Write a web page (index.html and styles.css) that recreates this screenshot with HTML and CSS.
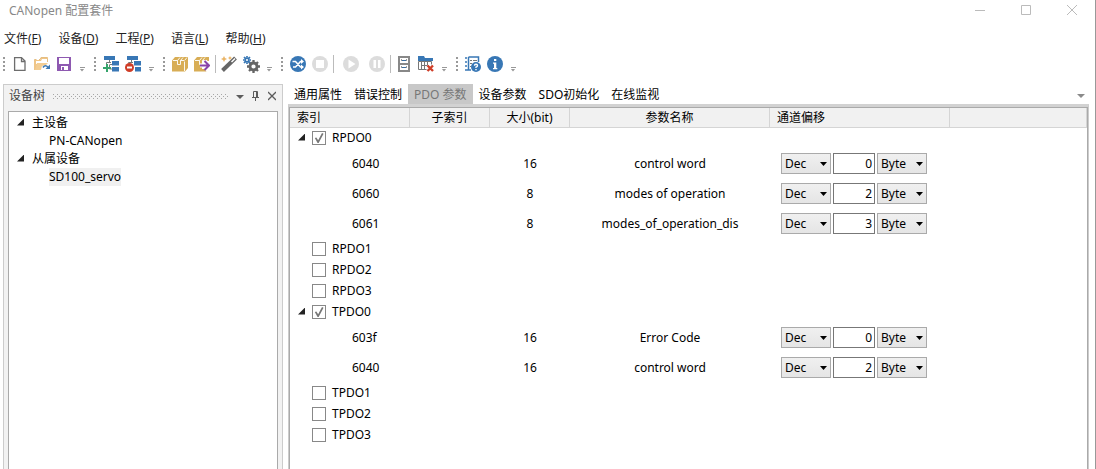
FILE: index.html
```html
<!DOCTYPE html>
<html lang="zh-CN">
<head>
<meta charset="utf-8">
<title>CANopen 配置套件</title>
<link rel="stylesheet" href="styles.css">
</head>
<body>
<div class="window">
  <header class="titlebar">
    <h1 class="title">CANopen 配置套件</h1>
    <div class="window-buttons">
      <button class="window-button" aria-label="最小化"><svg width="12" height="12"><path d="M1 6.500h10"/></svg></button>
      <button class="window-button" aria-label="最大化"><svg width="12" height="12"><path d="M1.500 1.500h9v9h-9z"/></svg></button>
      <button class="window-button" aria-label="关闭"><svg width="12" height="12"><path d="M1 1l10 10M11 1L1 11"/></svg></button>
    </div>
  </header>

  <nav class="menubar">
    <button class="menu-item">文件(<u>F</u>)</button>
    <button class="menu-item">设备(<u>D</u>)</button>
    <button class="menu-item">工程(<u>P</u>)</button>
    <button class="menu-item">语言(<u>L</u>)</button>
    <button class="menu-item">帮助(<u>H</u>)</button>
  </nav>

  <div class="toolbars">
    <div class="toolbar">
      <span class="grip"></span>
      <button class="tool" aria-label="新建"><svg width="16" height="16"><path fill="#fff" stroke="#6d6d6d" stroke-width="1.300" d="M2.600 1.600h6.900l3.500 3.500v9.300H2.600zM9.500 2v3.500h3.500"/></svg></button>
      <button class="tool" aria-label="打开"><svg width="16" height="16"><path fill="none" stroke="#e5bd80" d="M.5 13V3.500h2M5 3.500h1l1-2h6.500V6"/><path fill="#efc587" d="M0 14V5l1-1h5l1-2h7v1H8L7 5H2v3h10v1H5l-3 5z"/><path fill="#f3cd93" d="M3 7h11l-2 2-4 1-1 4H1z"/><path fill="none" stroke="#3c78b4" stroke-width="1.700" d="M9 11.500q2.500-3.500 5 0"/><path fill="#3c78b4" d="M16 8.500V13h-4.500z"/></svg></button>
      <button class="tool" aria-label="保存"><svg width="16" height="16"><path fill="#8e59b1" fill-rule="evenodd" d="M1 1h14v14H1zM3 2v6h10V2zM5 10v4h1v-3h2v3h4v-4z"/></svg></button>
      <button class="overflow" aria-label="更多"></button>
    </div>
    <div class="toolbar">
      <span class="grip"></span>
      <button class="tool" aria-label="添加设备"><svg width="16" height="16"><path fill="#3877b5" d="M1 0h11v4H1zM9 5h7v4.500H9zM9 11h7v4.500H9z"/><path fill="none" stroke="#777" d="M6.500 4v2M3.500 8V6.500H8M6.500 9v4H9M6.500 8.500H9"/><path stroke="#36a46c" stroke-width="2" d="M4 8v8M0 12h8"/></svg></button>
      <button class="tool" aria-label="移除设备"><svg width="16" height="16"><path fill="#3877b5" d="M2 0h11v4H2zM9 5h7v4.500H9zM10 11h6v4.500h-6z"/><path fill="none" stroke="#777" d="M6.500 4v2M3.500 7.500v-1H8"/><circle cx="4.500" cy="11.500" r="4.500" fill="#cf3d27"/><path stroke="#fff" stroke-width="2" d="M2 11.500h5"/></svg></button>
      <button class="overflow" aria-label="更多"></button>
    </div>
    <div class="toolbar">
      <span class="grip"></span>
      <button class="tool" aria-label="打包"><svg width="16" height="16"><path fill="#d8ad55" d="M0 4.500L3 1h13v11l-3 3.500H0z"/><path fill="none" stroke="#fff" stroke-width=".9" d="M1 4.500h4.500v4h3v-4h3.500M12.500 4.500l2.500-3M5.500 4.500l2.500-3M8.500 4.500l2.500-3M12.500 5.500V15"/></svg></button>
      <button class="tool" aria-label="导出"><svg width="16" height="16"><path fill="#d8ad55" d="M0 4.500L3 1h12v4H8v10.500H0zM8 13h5v1.500l-1 1H8z"/><path fill="none" stroke="#fff" stroke-width=".9" d="M1 4.500h4.500v4h3v-4h3.500M5.500 4.500l2.500-3M8.500 4.500l2.500-3"/><path fill="none" stroke="#fff" stroke-width="4" d="M6 9.500h8M11 5l4 4.500-4 4.500"/><path fill="none" stroke="#8844a8" stroke-width="2" d="M6 9.500h8.500M10.500 5l4.500 4.500-4.500 4.500"/></svg></button>
      <span class="separator"></span>
      <button class="tool" aria-label="向导"><svg width="16" height="16"><path stroke="#666" stroke-width="4" d="M1.500 14.500L14.500 2"/><path stroke="#fff" stroke-width="1.500" d="M10.500 6l3.500-3.500"/><path fill="#eab567" d="M3 0l1 2 2 1-2 1-1 2-1-2-2-1 2-1zM9 0l.7 1.300L11 2l-1.300.7L9 4l-.7-1.300L7 2l1.300-.7z"/></svg></button>
      <button class="tool" aria-label="设置"><svg width="17" height="17"><circle cx="10.500" cy="10.500" r="3.500" fill="none" stroke="#666" stroke-width="2.800"/><path stroke="#666" stroke-width="2.300" d="M10.500 4v2.500M10.500 14.500V17M4 10.500h2.500M14.500 10.500H17M6 6l1.500 1.500M13.500 13.500L15 15M15 6l-1.500 1.500M7.500 13.500L6 15"/><circle cx="4" cy="4" r="1.900" fill="none" stroke="#3877b5" stroke-width="1.700"/><path stroke="#3877b5" stroke-width="1.700" d="M4 0v1.500M4 6.500V8M0 4h1.500M6.500 4H8M1 1l1.500 1.500M5.500 5.500L7 7M7 1L5.500 2.500M2.500 5.500L1 7"/></svg></button>
      <button class="overflow" aria-label="更多"></button>
    </div>
    <div class="toolbar">
      <span class="grip"></span>
      <button class="tool" aria-label="连接"><svg width="16" height="16"><circle cx="8" cy="8" r="8" fill="#3877b5"/><path fill="none" stroke="#fff" stroke-width="1.600" d="M2.500 5.500h3l5 5.500H13M3 11h2.500l5-5.500H12"/><path fill="#fff" d="M11 3l3 2.500L11 8zM11 8.500l3 2.500-3 2.500z"/></svg></button>
      <button class="tool" aria-label="断开" disabled><svg width="16" height="16"><circle cx="8" cy="8" r="8" fill="#dcdcdc"/><path fill="#fff" d="M4 4h8v8H4z"/></svg></button>
      <span class="separator"></span>
      <button class="tool tool-wide" aria-label="运行" disabled><svg width="16" height="16"><circle cx="8" cy="8" r="8" fill="#dcdcdc"/><path fill="#fff" d="M5.500 3.500l7 4.500-7 4.500z"/></svg></button>
      <button class="tool tool-wide" aria-label="暂停" disabled><svg width="16" height="16"><circle cx="8" cy="8" r="8" fill="#dcdcdc"/><path fill="#fff" d="M4.500 4H7v8H4.500zM9 4h2.500v8H9z"/></svg></button>
      <span class="separator"></span>
      <button class="tool" aria-label="对象字典"><svg width="16" height="16"><path fill="#fff" stroke="#888" stroke-width="2" d="M3 1h10v14H3z"/><path stroke="#888" stroke-width="2" d="M2 8h12"/><path stroke="#3c6e9f" d="M6 4.500h4M6 11.500h4"/><path stroke="#999" d="M5.500 3v2M10.500 3v2M5.500 10v2M10.500 10v2"/></svg></button>
      <button class="tool" aria-label="清除表格"><svg width="16" height="16"><path fill="#3877b5" d="M0 0h6l1 2h8v3H0z"/><path fill="#fff" stroke="#777" d="M.5 5.500h13v8H.5zM3.500 6v7M6.500 5v8M9.500 6v7M3 9.500h9"/><path stroke="#fff" stroke-width="4" d="M9.500 9.500l5 5M14.500 9.500l-5 5"/><path stroke="#cf3d27" stroke-width="2.400" d="M9.500 9.500l5.500 5.500M15 9.500L9.500 15"/></svg></button>
      <button class="overflow" aria-label="更多"></button>
    </div>
    <div class="toolbar">
      <span class="grip"></span>
      <button class="tool" aria-label="帮助"><svg width="16" height="16"><path fill="none" stroke="#3877b5" stroke-width="1.500" d="M0 2h2M3.500 1h10v5M0 6h2M0 10h2M3.500 1v13M0 14h6"/><path stroke="#777" d="M5 4.500h2M8 4.500h4M5 7.500h2M5 10.500h1"/><circle cx="11" cy="11" r="5" fill="#3877b5"/><path fill="none" stroke="#fff" stroke-width="1.400" d="M9.500 9.700q0-1.400 1.500-1.400t1.500 1.300-1.500 1.500V12M11 13v1.200"/></svg></button>
      <button class="tool" aria-label="关于"><svg width="16" height="16"><circle cx="8" cy="8" r="8" fill="#3877b5"/><path fill="#fff" d="M7 3h2.300v2H7zM6 6.500h3.300V12h1v1.200H6V12h1V7.700H6z"/></svg></button>
      <button class="overflow" aria-label="更多"></button>
    </div>
  </div>

  <main class="workspace">
    <aside class="dock">
      <div class="dock-header">
        <h2 class="dock-title">设备树</h2>
        <svg class="dock-dots" height="5"><defs><pattern id="dots" width="4" height="4" patternUnits="userSpaceOnUse"><path fill="#a6a6a6" d="M0 0h1v1H0zM2 2h1v1H2z"/></pattern></defs><rect width="100%" height="5" fill="url(#dots)"/></svg>
        <button class="dock-button" aria-label="菜单"><svg width="8" height="10"><path fill="#5c5c5c" d="M0 4h8L4 8z"/></svg></button>
        <button class="dock-button" aria-label="固定"><svg width="8" height="10"><path fill="none" stroke="#5c5c5c" d="M1.500 6V.5h4V6M0 6.500h7M3.500 7v3M4.500 1v5"/></svg></button>
        <button class="dock-button" aria-label="关闭"><svg width="8" height="10"><path stroke="#5c5c5c" stroke-width="1.300" d="M0 1l8 8M8 1L0 9"/></svg></button>
      </div>
      <ul class="tree">
        <li><div class="tree-node"><span class="expander"></span>主设备</div>
          <ul class="tree-children"><li class="tree-node"><span>PN-CANopen</span></li></ul></li>
        <li><div class="tree-node"><span class="expander"></span>从属设备</div>
          <ul class="tree-children"><li class="tree-node"><span class="selected">SD100_servo</span></li></ul></li>
      </ul>
    </aside>

    <section class="document">
      <div class="tabs" role="tablist">
        <button class="tab" role="tab">通用属性</button>
        <button class="tab" role="tab">错误控制</button>
        <button class="tab active" role="tab" aria-selected="true">PDO 参数</button>
        <button class="tab" role="tab">设备参数</button>
        <button class="tab" role="tab">SDO初始化</button>
        <button class="tab" role="tab">在线监视</button>
        <button class="tab-list" aria-label="标签列表"><svg width="8" height="4"><path fill="#8a8a8a" d="M0 0h8L4 4z"/></svg></button>
      </div>
      <div class="page">
        <div class="page-frame">
        <table class="grid">
          <colgroup><col class="col-index"><col class="col-narrow"><col class="col-narrow"><col class="col-name"><col class="col-offset"><col></colgroup>
          <thead>
            <tr><th class="left">索引</th><th>子索引</th><th>大小(bit)</th><th>参数名称</th><th class="left">通道偏移</th><th></th></tr>
          </thead>
          <tbody>
            <tr class="group"><td colspan="6"><label class="pdo"><span class="expander"></span><input type="checkbox" checked>RPDO0</label></td></tr>
            <tr class="entry"><td class="index">6040</td><td></td><td>16</td><td>control word</td><td colspan="2"><div class="offset"><span class="combo"><select aria-label="进制"><option>Dec</option></select></span><input type="text" value="0" aria-label="偏移"><span class="combo"><select aria-label="单位"><option>Byte</option></select></span></div></td></tr>
            <tr class="entry"><td class="index">6060</td><td></td><td>8</td><td>modes of operation</td><td colspan="2"><div class="offset"><span class="combo"><select aria-label="进制"><option>Dec</option></select></span><input type="text" value="2" aria-label="偏移"><span class="combo"><select aria-label="单位"><option>Byte</option></select></span></div></td></tr>
            <tr class="entry"><td class="index">6061</td><td></td><td>8</td><td>modes_of_operation_dis</td><td colspan="2"><div class="offset"><span class="combo"><select aria-label="进制"><option>Dec</option></select></span><input type="text" value="3" aria-label="偏移"><span class="combo"><select aria-label="单位"><option>Byte</option></select></span></div></td></tr>
            <tr class="group"><td colspan="6"><label class="pdo leaf"><input type="checkbox">RPDO1</label></td></tr>
            <tr class="group"><td colspan="6"><label class="pdo leaf"><input type="checkbox">RPDO2</label></td></tr>
            <tr class="group"><td colspan="6"><label class="pdo leaf"><input type="checkbox">RPDO3</label></td></tr>
            <tr class="group"><td colspan="6"><label class="pdo"><span class="expander"></span><input type="checkbox" checked>TPDO0</label></td></tr>
            <tr class="entry"><td class="index">603f</td><td></td><td>16</td><td>Error Code</td><td colspan="2"><div class="offset"><span class="combo"><select aria-label="进制"><option>Dec</option></select></span><input type="text" value="0" aria-label="偏移"><span class="combo"><select aria-label="单位"><option>Byte</option></select></span></div></td></tr>
            <tr class="entry"><td class="index">6040</td><td></td><td>16</td><td>control word</td><td colspan="2"><div class="offset"><span class="combo"><select aria-label="进制"><option>Dec</option></select></span><input type="text" value="2" aria-label="偏移"><span class="combo"><select aria-label="单位"><option>Byte</option></select></span></div></td></tr>
            <tr class="group"><td colspan="6"><label class="pdo leaf"><input type="checkbox">TPDO1</label></td></tr>
            <tr class="group"><td colspan="6"><label class="pdo leaf"><input type="checkbox">TPDO2</label></td></tr>
            <tr class="group"><td colspan="6"><label class="pdo leaf"><input type="checkbox">TPDO3</label></td></tr>
          </tbody>
        </table>
        </div>
      </div>
    </section>
  </main>
</div>
</body>
</html>
```
FILE: styles.css
```css
* { box-sizing: border-box; }

body,
button,
input,
select {
  margin: 0;
  font: 12px/18px "Noto Sans", "Noto Sans CJK SC", sans-serif;
  color: #000;
}

button {
  display: flex;
  align-items: center;
  justify-content: center;
  padding: 0;
  border: 0;
  background: none;
}

h1, h2, ul {
  margin: 0;
  padding: 0;
  font-size: 12px;
  font-weight: 400;
  list-style: none;
}

.window {
  display: flex;
  flex-direction: column;
  min-height: 100vh;
  border-right: 1px solid #999;
  background: #fff;
}

.titlebar {
  display: flex;
  justify-content: space-between;
  height: 28px;
}

.title {
  padding: 2px 9px;
  color: #888;
}

.window-buttons { display: flex; }

.window-button {
  width: 46px;
  height: 20px;
}

.window-button path {
  fill: none;
  stroke: #bbb;
}

.menubar {
  display: flex;
  gap: 17px;
  padding: 2px 4px;
}

.menu-item { color: #222; }

.toolbars {
  display: flex;
  height: 34px;
  padding: 3px;
}

.toolbar {
  display: flex;
  align-items: center;
  height: 22px;
}

.grip {
  width: 2px;
  height: 14px;
  margin-right: 4px;
  background: repeating-linear-gradient(#999 0 2px, transparent 2px 4px);
}

.tool {
  width: 22px;
  height: 22px;
}

.tool-wide {
  width: 26px;
  padding-left: 4px;
}

.separator {
  width: 1px;
  height: 18px;
  margin: 0 2px;
  background: #bbb;
}

.overflow {
  flex-direction: column;
  gap: 1px;
  width: 6px;
  height: 6px;
  margin: 10px 9px 0 4px;
}

.overflow::before {
  content: "";
  width: 5px;
  height: 1px;
  background: #999;
}

.overflow::after {
  content: "";
  width: 5px;
  height: 3px;
  background: #999;
  clip-path: polygon(0 0, 100% 0, 50% 100%);
}

.workspace {
  display: flex;
  flex: 1;
  gap: 5px;
  padding: 0 6px 0 3px;
}

.dock {
  display: flex;
  flex-direction: column;
  width: 280px;
  border: 1px solid #ccc;
  border-bottom: 0;
  background: #f2f2f2;
}

.dock-header {
  display: flex;
  align-items: center;
  gap: 8px;
  height: 26px;
  padding: 0 6px 4px 5px;
}

.dock-title { color: #444; }

.dock-dots {
  flex: 1;
  min-width: 0;
}

.tree {
  flex: 1;
  margin: 0 4px;
  padding: 2px 0 0 8px;
  border: 1px solid #aaa;
  border-bottom: 0;
  background: #fff;
}

.tree-node {
  display: flex;
  align-items: center;
  gap: 8px;
  height: 18px;
}

.tree-children { padding-left: 32px; }

.selected { background: #f0f0f0; }

.expander {
  width: 7px;
  height: 7px;
  margin-bottom: 2px;
  background: #222;
  clip-path: polygon(100% 0, 100% 100%, 0 100%);
}

.document {
  display: flex;
  flex: 1;
  flex-direction: column;
  min-width: 0;
}

.tabs {
  display: flex;
  height: 20px;
}

.tab { padding: 2px 6px 0; }

.active {
  background: #c8c8c8;
  color: #777;
}

.tab-list {
  width: 16px;
  margin-left: auto;
  padding-top: 4px;
}

.page {
  display: flex;
  flex: 1;
  border: 1px solid #ccc;
  border-top: 3px solid #d2d2d2;
  border-bottom: 0;
}

.page-frame {
  flex: 1;
  min-width: 0;
  border: 1px solid #aaa;
  border-bottom: 0;
}

.grid {
  width: 100%;
  border-collapse: separate;
  border-spacing: 0;
  table-layout: fixed;
}

.col-index { width: 120px; }
.col-narrow { width: 80px; }
.col-name { width: 200px; }
.col-offset { width: 180px; }

th {
  height: 20px;
  padding: 0;
  border-right: 1px solid #d5d5d5;
  border-bottom: 1px solid #d5d5d5;
  background: #f1f1f1;
  font-weight: 400;
}

.left {
  padding-left: 7px;
  text-align: left;
}

td {
  padding: 0;
  text-align: center;
}

.group { height: 21px; }
.group td { vertical-align: top; }
.entry { height: 30px; }

.index {
  padding-left: 62px;
  text-align: left;
}

.pdo {
  display: flex;
  align-items: center;
  height: 20px;
  padding-left: 8px;
}

.leaf { padding-left: 22px; }
.pdo .expander { margin-right: 7px; }

input[type="checkbox"] {
  width: 14px;
  height: 14px;
  margin: 0 6px 0 0;
  border: 1px solid #888;
  background: #fff;
  appearance: none;
}

input[type="checkbox"]:checked::before {
  content: "";
  display: block;
  width: 12px;
  height: 12px;
  background: #777;
  clip-path: polygon(15% 50%, 28% 45%, 43% 68%, 75% 8%, 88% 14%, 47% 92%, 38% 92%);
}

.offset {
  display: flex;
  gap: 2px;
  padding: 0 0 1px 11px;
}

.combo { position: relative; }

.combo::after {
  content: "";
  position: absolute;
  top: 9px;
  right: 4px;
  width: 7px;
  height: 4px;
  background: #000;
  clip-path: polygon(0 0, 100% 0, 50% 100%);
  pointer-events: none;
}

select {
  display: block;
  width: 50px;
  height: 21px;
  padding: 0 3px;
  border: 1px solid #aaa;
  border-radius: 0;
  background: linear-gradient(#f0f0f0, #e5e5e5);
  appearance: none;
}

input[type="text"] {
  width: 42px;
  height: 21px;
  padding: 0 2px 1px;
  border: 1px solid #777;
  text-align: right;
}
```
